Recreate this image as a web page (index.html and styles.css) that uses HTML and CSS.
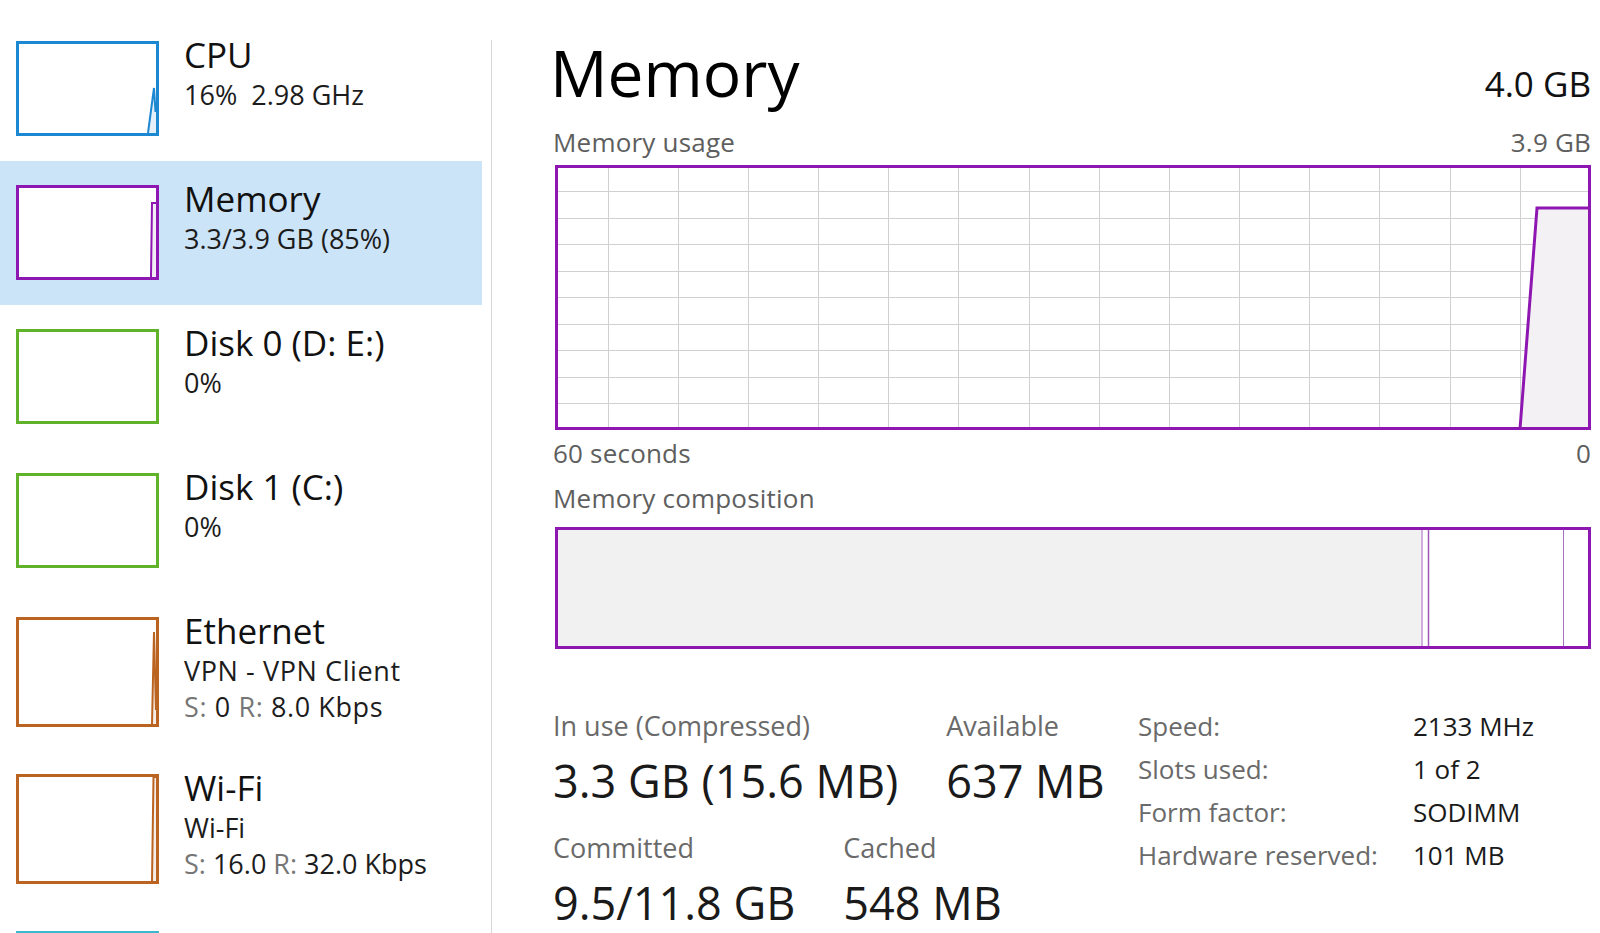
FILE: index.html
```html
<!DOCTYPE html>
<html>
<head>
<meta charset="utf-8">
<title>Task Manager - Memory</title>
<link rel="stylesheet" href="styles.css">
</head>
<body>
<div class="app">
  <aside class="sidebar">
    <div class="item">
      <div class="thumb cpu">
        <svg viewBox="0 0 137 89" preserveAspectRatio="none">
          <polygon points="129,89 135,44 137,62 137,89" class="fill"/>
          <polyline points="129,89 135,44 136.5,68 137,58" class="line"/>
        </svg>
      </div>
      <div class="info">
        <div class="name">CPU</div>
        <div class="sub">16%&nbsp; 2.98 GHz</div>
      </div>
    </div>
    <div class="item selected">
      <div class="thumb mem">
        <svg viewBox="0 0 137 89" preserveAspectRatio="none">
          <polygon points="132,89 133,15 137,15 137,89" class="fill"/>
          <polyline points="132,89 133,15 137,15" class="line"/>
        </svg>
      </div>
      <div class="info">
        <div class="name">Memory</div>
        <div class="sub">3.3/3.9 GB (85%)</div>
      </div>
    </div>
    <div class="item">
      <div class="thumb disk"></div>
      <div class="info">
        <div class="name">Disk 0 (D: E:)</div>
        <div class="sub">0%</div>
      </div>
    </div>
    <div class="item">
      <div class="thumb disk"></div>
      <div class="info">
        <div class="name">Disk 1 (C:)</div>
        <div class="sub">0%</div>
      </div>
    </div>
    <div class="item tall">
      <div class="thumb net">
        <svg viewBox="0 0 137 104" preserveAspectRatio="none">
          <polygon points="133,104 135,12 137,90 137,104" class="fill"/>
          <polyline points="133,104 135,12 137,90" class="line"/>
        </svg>
      </div>
      <div class="info">
        <div class="name">Ethernet</div>
        <div class="sub wide">VPN - VPN Client</div>
        <div class="sub wide"><span class="dim">S:</span> 0 <span class="dim">R:</span> 8.0 Kbps</div>
      </div>
    </div>
    <div class="item tall">
      <div class="thumb net">
        <svg viewBox="0 0 137 105" preserveAspectRatio="none">
          <polygon points="133,105 134.5,0 137,0 137,105" class="fill"/>
          <polyline points="133,105 134.5,0 137,0" class="line"/>
        </svg>
      </div>
      <div class="info">
        <div class="name">Wi-Fi</div>
        <div class="sub">Wi-Fi</div>
        <div class="sub"><span class="dim">S:</span> 16.0 <span class="dim">R:</span> 32.0 Kbps</div>
      </div>
    </div>
    <div class="item">
      <div class="thumb gpu"></div>
    </div>
  </aside>

  <div class="divider"></div>

  <main class="detail">
    <div class="head">
      <h1 class="title">Memory</h1>
      <div class="total">4.0 GB</div>
    </div>
    <div class="caption usage"><span>Memory usage</span><span>3.9 GB</span></div>
    <div class="graph">
      <svg viewBox="0 0 1036 265" preserveAspectRatio="none">
        <g class="grid">
          <line x1="53.5" y1="0" x2="53.5" y2="265"/>
          <line x1="123.5" y1="0" x2="123.5" y2="265"/>
          <line x1="193.5" y1="0" x2="193.5" y2="265"/>
          <line x1="263.5" y1="0" x2="263.5" y2="265"/>
          <line x1="333.5" y1="0" x2="333.5" y2="265"/>
          <line x1="403.5" y1="0" x2="403.5" y2="265"/>
          <line x1="474.5" y1="0" x2="474.5" y2="265"/>
          <line x1="544.5" y1="0" x2="544.5" y2="265"/>
          <line x1="614.5" y1="0" x2="614.5" y2="265"/>
          <line x1="684.5" y1="0" x2="684.5" y2="265"/>
          <line x1="754.5" y1="0" x2="754.5" y2="265"/>
          <line x1="824.5" y1="0" x2="824.5" y2="265"/>
          <line x1="895.5" y1="0" x2="895.5" y2="265"/>
          <line x1="965.5" y1="0" x2="965.5" y2="265"/>
          <line x1="0" y1="26.5" x2="1036" y2="26.5"/>
          <line x1="0" y1="53.5" x2="1036" y2="53.5"/>
          <line x1="0" y1="79.5" x2="1036" y2="79.5"/>
          <line x1="0" y1="106.5" x2="1036" y2="106.5"/>
          <line x1="0" y1="132.5" x2="1036" y2="132.5"/>
          <line x1="0" y1="159.5" x2="1036" y2="159.5"/>
          <line x1="0" y1="185.5" x2="1036" y2="185.5"/>
          <line x1="0" y1="212.5" x2="1036" y2="212.5"/>
          <line x1="0" y1="238.5" x2="1036" y2="238.5"/>
        </g>
        <polygon class="area" points="965,263 982,43 1034,43 1034,263"/>
        <polyline class="plot" points="965,264 982,43 1036,43"/>
        <rect class="frame" x="1.5" y="1.5" width="1033" height="262"/>
      </svg>
    </div>
    <div class="caption axis"><span>60 seconds</span><span>0</span></div>
    <div class="caption comp-label"><span>Memory composition</span></div>
    <div class="comp">
      <svg viewBox="0 0 1036 122" preserveAspectRatio="none">
        <rect class="inuse" x="3" y="3" width="864" height="116"/>
        <line class="sep-mod" x1="867" y1="3" x2="867" y2="119"/>
        <line class="sep" x1="873.5" y1="3" x2="873.5" y2="119"/>
        <line class="sep-thin" x1="1008.5" y1="3" x2="1008.5" y2="119"/>
        <rect class="frame" x="1.5" y="1.5" width="1033" height="119"/>
      </svg>
    </div>

    <div class="stats">
      <div class="stat-main">
        <div class="stat-row">
          <div class="stat">
            <div class="label">In use (Compressed)</div>
            <div class="value">3.3 GB (15.6 MB)</div>
          </div>
          <div class="stat">
            <div class="label">Available</div>
            <div class="value">637 MB</div>
          </div>
        </div>
        <div class="stat-row second">
          <div class="stat">
            <div class="label">Committed</div>
            <div class="value">9.5/11.8 GB</div>
          </div>
          <div class="stat">
            <div class="label">Cached</div>
            <div class="value">548 MB</div>
          </div>
        </div>
      </div>
      <dl class="specs">
        <dt>Speed:</dt><dd>2133 MHz</dd>
        <dt>Slots used:</dt><dd>1 of 2</dd>
        <dt>Form factor:</dt><dd>SODIMM</dd>
        <dt>Hardware reserved:</dt><dd>101 MB</dd>
      </dl>
    </div>
  </main>
</div>
</body>
</html>
```

FILE: styles.css
```css
html, body {
  margin: 0;
  padding: 0;
  background: #ffffff;
  width: 1600px;
  height: 933px;
  overflow: hidden;
  font-family: "Open Sans", "Noto Sans", "DejaVu Sans", sans-serif;
  color: #1a1a1a;
}

.app {
  display: flex;
  height: 933px;
  overflow: hidden;
}

/* ---------- sidebar ---------- */
.sidebar {
  width: 482px;
  flex: none;
  padding-top: 17px;
  box-sizing: border-box;
}

.item {
  height: 144px;
  display: flex;
  align-items: flex-start;
  padding: 20px 0 0 16px;
  box-sizing: border-box;
}

.item.tall {
  height: 157px;
}

.item.selected {
  background: #cce4f7;
}

.thumb {
  width: 143px;
  height: 95px;
  margin-top: 4px;
  flex: none;
  box-sizing: border-box;
  border: 3px solid #000;
  background: #fff;
}

.item.tall .thumb {
  height: 110px;
}

.thumb svg {
  display: block;
  width: 100%;
  height: 100%;
}

.thumb .fill { stroke: none; }
.thumb .line { fill: none; stroke-width: 2; }

.thumb.cpu { border-color: #1d88d2; }
.thumb.cpu .fill { fill: #e3f0fa; }
.thumb.cpu .line { stroke: #1d88d2; }

.thumb.mem { border-color: #8f17b1; }
.thumb.mem .fill { fill: #f3eef5; }
.thumb.mem .line { stroke: #8f17b1; }

.thumb.disk { border-color: #5fb22a; }

.thumb.net { border-color: #bb6422; }
.thumb.net .fill { fill: #f6eee8; }
.thumb.net .line { stroke: #bb6422; }

.thumb.gpu { border-color: #3bb8cc; }

.info {
  margin-left: 25px;
  white-space: nowrap;
}

.name {
  font-size: 35px;
  line-height: 36px;
  margin-bottom: 4px;
  color: #111;
}

.sub {
  font-size: 27px;
  line-height: 36px;
  color: #1c1c1c;
}

.sub.wide {
  letter-spacing: 0.6px;
}

.sub .dim {
  color: #767676;
}

/* ---------- divider ---------- */
.divider {
  width: 1px;
  flex: none;
  margin: 40px 0 0 9px;
  background: #d6d6d6;
}

/* ---------- detail ---------- */
.detail {
  flex: 1;
  min-width: 0;
  padding: 33px 9px 0 61px;
  box-sizing: border-box;
}

.head {
  display: flex;
  justify-content: space-between;
  align-items: baseline;
  height: 80px;
}

.title {
  margin: 0 0 0 -3px;
  font-size: 64px;
  line-height: 80px;
  font-weight: 400;
  color: #000;
}

.total {
  font-size: 35px;
  color: #111;
}

.caption {
  display: flex;
  justify-content: space-between;
  font-size: 26px;
  line-height: 30px;
  color: #5e5e5e;
  letter-spacing: 0.2px;
}

.caption.usage { margin-top: 14px; }
.caption.axis { margin-top: 8px; }
.caption.comp-label { margin-top: 15px; }

.graph {
  margin: 8px 0 0 2px;
  height: 265px;
}

.graph svg, .comp svg {
  display: block;
  width: 100%;
  height: 100%;
}

.grid line {
  stroke: #d0d0d0;
  stroke-width: 1;
}

.area { fill: #f3f1f4; }
.plot { fill: none; stroke: #8f17b1; stroke-width: 3; }
.frame { fill: none; stroke: #8f17b1; stroke-width: 3; }

.comp {
  margin: 14px 0 0 2px;
  height: 122px;
}

.inuse { fill: #f1f1f1; }
.sep-mod { stroke: #d2aee0; stroke-width: 2; }
.sep { stroke: #9c55b8; stroke-width: 1.5; }
.sep-thin { stroke: #a873c2; stroke-width: 1; }

/* ---------- stats ---------- */
.stats {
  display: flex;
  align-items: flex-start;
  margin-top: 60px;
}

.stat-main {
  width: 585px;
  flex: none;
}

.stat-row {
  display: flex;
  gap: 48px;
}

.stat-row.second {
  margin-top: 25px;
}

.label {
  font-size: 27px;
  line-height: 34px;
  color: #6a6a6a;
  white-space: nowrap;
}

.value {
  margin-top: 13px;
  font-size: 45px;
  line-height: 50px;
  color: #1a1a1a;
  white-space: nowrap;
}

.specs {
  display: grid;
  grid-template-columns: 275px auto;
  margin: -4px 0 0 0;
  font-size: 26px;
  line-height: 43px;
}

.specs dt {
  color: #6a6a6a;
  white-space: nowrap;
}

.specs dd {
  margin: 0;
  color: #1a1a1a;
  white-space: nowrap;
}
```
